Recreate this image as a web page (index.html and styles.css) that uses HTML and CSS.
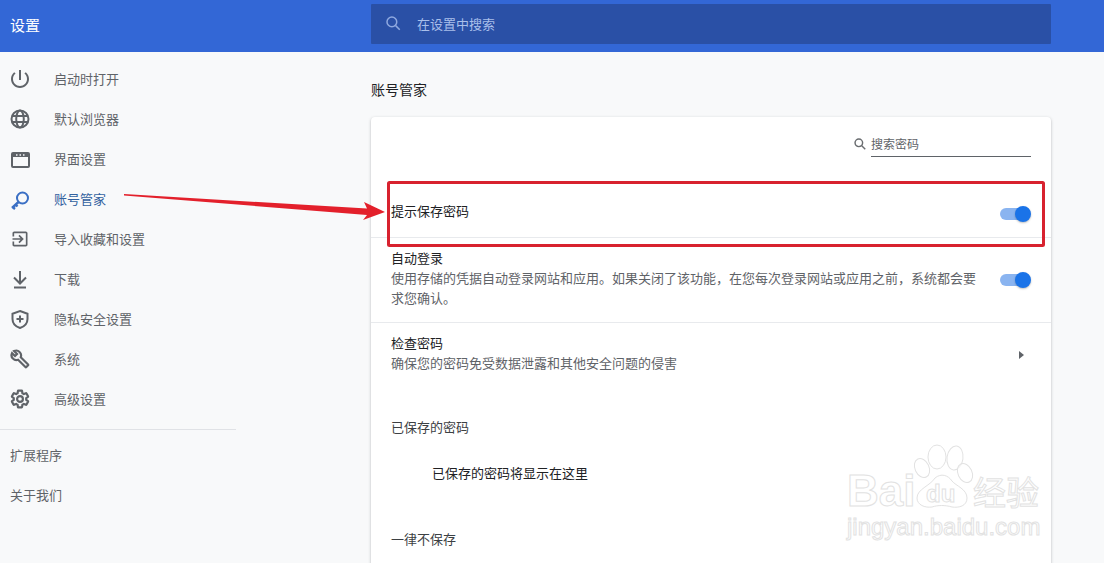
FILE: index.html
```html
<!DOCTYPE html>
<html lang="zh-CN">
<head>
    <meta charset="UTF-8">
    <title>设置</title>
    <link rel="stylesheet" href="styles.css">
</head>
<body>
    <header class="top-bar">
        <div class="top-title">设置</div>
        <div class="top-search">
            <svg class="top-search-icon" viewBox="0 0 24 24"><circle cx="10.5" cy="10.5" r="6.5"/><path d="M15.5 15.5L21 21"/></svg>
            <span>在设置中搜索</span>
        </div>
    </header>

    <div class="layout">
        <nav class="side-nav">
            <a class="nav-item">
                <svg class="nav-icon filled" viewBox="0 0 24 24"><path d="M13 3h-2v10h2V3zm4.83 2.17l-1.42 1.42C17.99 7.86 19 9.81 19 12c0 3.87-3.13 7-7 7s-7-3.13-7-7c0-2.19 1.01-4.14 2.58-5.42L6.17 5.17C4.23 6.82 3 9.26 3 12c0 4.97 4.03 9 9 9s9-4.03 9-9c0-2.74-1.23-5.18-3.17-6.83z"/></svg>
                <span class="nav-label">启动时打开</span>
            </a>
            <a class="nav-item">
                <svg class="nav-icon" viewBox="0 0 24 24"><circle cx="12" cy="12" r="8.5"/><ellipse cx="12" cy="12" rx="3.8" ry="8.5"/><path d="M4 9h16M4 15h16"/></svg>
                <span class="nav-label">默认浏览器</span>
            </a>
            <a class="nav-item">
                <svg class="nav-icon" viewBox="0 0 24 24"><rect x="4" y="6" width="17" height="14" rx="1"/><path d="M4 8h17" stroke-width="4"/><path d="M8 8h1.5M11.500 8h1.5M15 8h1.5" stroke="#f8f9fa" stroke-width="1.500"/></svg>
                <span class="nav-label">界面设置</span>
            </a>
            <a class="nav-item active">
                <svg class="nav-icon" viewBox="0 0 24 24"><circle cx="14.500" cy="11" r="5.500"/><path d="M10.500 15L4 21M4.500 20l2.500 2M7.500 17.500l2 2" stroke-width="2.400"/></svg>
                <span class="nav-label">账号管家</span>
            </a>
            <a class="nav-item">
                <svg class="nav-icon small filled" viewBox="0 0 24 24"><path d="M10.09 15.59L11.5 17l5-5-5-5-1.41 1.41L12.67 11H3v2h9.67l-2.58 2.59zM19 3H5c-1.11 0-2 .9-2 2v4h2V5h14v14H5v-4H3v4c0 1.1.89 2 2 2h14c1.1 0 2-.9 2-2V5c0-1.1-.9-2-2-2z"/></svg>
                <span class="nav-label">导入收藏和设置</span>
            </a>
            <a class="nav-item">
                <svg class="nav-icon" viewBox="0 0 24 24"><path d="M12 4v12M6 10.500l6 6 6-6M6 20.500h12"/></svg>
                <span class="nav-label">下载</span>
            </a>
            <a class="nav-item">
                <svg class="nav-icon" viewBox="0 0 24 24"><path d="M12 4l7.500 2.800v5.200c0 4.200-3 7.500-7.500 9-4.500-1.500-7.500-4.800-7.500-9V6.800z"/><path d="M12 8.500v7M8.500 12h7"/></svg>
                <span class="nav-label">隐私安全设置</span>
            </a>
            <a class="nav-item">
                <svg class="nav-icon small thick" viewBox="0 0 24 24"><path d="M21.700 18.600l-8.800-8.800c.8-2.100.4-4.500-1.400-6.200C9.700 1.800 7 1.500 4.900 2.500L8.500 6 6 8.500 2.400 5C1.400 7.100 1.800 9.800 3.500 11.500c1.700 1.700 4.100 2.200 6.200 1.400l8.800 8.800c.3.300.8.300 1.100 0l2.100-2.100c.3-.2.300-.7 0-1z"/></svg>
                <span class="nav-label">系统</span>
            </a>
            <a class="nav-item">
                <svg class="nav-icon small thick" viewBox="0 0 24 24"><path d="M19.430 12.980c.04-.32.07-.64.07-.98s-.03-.66-.07-.98l2.110-1.650c.19-.15.24-.42.12-.64l-2-3.460c-.12-.22-.39-.3-.61-.22l-2.490 1c-.52-.4-1.080-.73-1.690-.98l-.38-2.650C14.460 2.180 14.250 2 14 2h-4c-.25 0-.46.18-.49.42l-.38 2.650c-.61.25-1.170.59-1.690.98l-2.490-1c-.23-.08-.49 0-.61.22l-2 3.460c-.13.22-.07.49.12.64l2.110 1.650c-.04.32-.07.65-.07.98s.03.66.07.98l-2.110 1.650c-.19.15-.24.42-.12.64l2 3.460c.12.22.39.3.61.22l2.490-1c.52.4 1.080.73 1.690.98l.38 2.650c.03.24.24.42.49.42h4c.25 0 .46-.18.49-.42l.38-2.650c.61-.25 1.170-.59 1.690-.98l2.490 1c.23.08.49 0 .61-.22l2-3.460c.12-.22.07-.49-.12-.64z"/><circle cx="12" cy="12" r="3.500"/></svg>
                <span class="nav-label">高级设置</span>
            </a>
            <div class="nav-divider"></div>
            <a class="nav-link">扩展程序</a>
            <a class="nav-link">关于我们</a>
        </nav>

        <main class="content">
            <h2 class="page-title">账号管家</h2>
            <section class="card">
                <div class="pw-search-row">
                    <svg class="pw-search-icon" viewBox="0 0 24 24"><circle cx="10" cy="10" r="6.500"/><path d="M15 15l6 6"/></svg>
                    <div class="pw-search-input">搜索密码</div>
                </div>
                <div class="row row-single">
                    <div class="row-title">提示保存密码</div>
                    <span class="toggle"></span>
                </div>
                <div class="row row-double">
                    <div class="row-text">
                        <div class="row-title">自动登录</div>
                        <div class="row-desc">使用存储的凭据自动登录网站和应用。如果关闭了该功能，在您每次登录网站或应用之前，系统都会要求您确认。</div>
                    </div>
                    <span class="toggle"></span>
                </div>
                <div class="row row-check">
                    <div class="row-text">
                        <div class="row-title">检查密码</div>
                        <div class="row-desc">确保您的密码免受数据泄露和其他安全问题的侵害</div>
                    </div>
                    <span class="chevron"></span>
                </div>
                <div class="list-heading saved">已保存的密码</div>
                <div class="list-empty">已保存的密码将显示在这里</div>
                <div class="list-heading never">一律不保存</div>
            </section>
        </main>
    </div>

    <svg class="markup" viewBox="0 0 1104 563">
        <rect class="markup-box" x="388.500" y="182.500" width="655" height="63" rx="1"/>
        <polygon class="markup-arrow" points="124,194 367,208.500 364,202 385,212 363,220 367,215 124,195.500"/>
        <g class="watermark">
            <ellipse cx="937" cy="457" rx="9" ry="12"/>
            <ellipse cx="955" cy="458" rx="8" ry="12" transform="rotate(8 955 458)"/>
            <ellipse cx="922" cy="468" rx="7" ry="10" transform="rotate(-25 922 468)"/>
            <ellipse cx="965" cy="473" rx="7" ry="10" transform="rotate(-25 965 473)"/>
            <path d="M935 478c6-5 13-3 17 3 4 5 15 8 15 17 0 8-8 10-15 9-7-2-14-2-20 0-7 1-15-2-15-9 0-9 13-12 18-20z"/>
            <text class="wm-logo" x="847" y="506">Bai</text>
            <text class="wm-du" x="926" y="502">du</text>
            <text class="wm-cn" x="973" y="505">经验</text>
            <text class="wm-url" x="847" y="535">jingyan.baidu.com</text>
        </g>
    </svg>
</body>
</html>
```

FILE: styles.css
```css
* {
    box-sizing: border-box;
    margin: 0;
    padding: 0;
}

html, body {
    height: 100%;
    overflow: hidden;
}

body {
    position: relative;
    background-color: #f8f9fa;
    color: #202124;
    font-family: "Noto Sans CJK SC", "Liberation Sans", sans-serif;
    font-size: 13px;
}

.top-bar {
    display: flex;
    height: 52px;
    padding-top: 4px;
    background-color: #3367d6;
}

.top-title {
    width: 371px;
    padding: 10px 0 0 10px;
    color: #fff;
    font-size: 15px;
    line-height: 22px;
}

.top-search {
    display: flex;
    align-items: center;
    width: 680px;
    height: 40px;
    padding: 0 0 2px 13px;
    border-radius: 1px;
    background-color: #2a50a6;
    color: #a9bfea;
}

.top-search-icon {
    width: 18px;
    height: 18px;
    margin-right: 15px;
    fill: none;
    stroke: #8fa9e0;
    stroke-width: 2;
}

.layout {
    display: flex;
}

.side-nav {
    width: 236px;
    padding-top: 7px;
    color: #5f6368;
}

.nav-item {
    display: flex;
    align-items: center;
    gap: 22px;
    height: 40px;
    padding-left: 8px;
}

.nav-item.active {
    color: #33629f;
}

.nav-label {
    margin-bottom: 2px;
}

.nav-icon {
    flex: none;
    width: 24px;
    height: 24px;
    fill: none;
    stroke: #5f6368;
    stroke-width: 2;
}

.nav-icon.small {
    width: 20px;
    height: 20px;
    margin: 0 2px;
}

.nav-icon.thick {
    stroke-width: 2.600;
}

.nav-icon.filled {
    fill: #5f6368;
    stroke: none;
}

.active .nav-icon {
    stroke: #3a6fc4;
}

.nav-divider {
    height: 1px;
    margin: 10px 0 6px;
    background-color: #e0e2e6;
}

.nav-link {
    display: block;
    height: 40px;
    padding-left: 10px;
    line-height: 38px;
}

.content {
    width: 680px;
    margin-left: 135px;
}

.page-title {
    height: 65px;
    padding-top: 27px;
    font-size: 14px;
    font-weight: 400;
    line-height: 20px;
}

.card {
    height: 520px;
    border-radius: 4px;
    background-color: #fff;
    box-shadow: 0 1px 3px rgba(60, 64, 67, 0.35);
}

.pw-search-row {
    display: flex;
    justify-content: flex-end;
    align-items: flex-start;
    height: 71px;
    padding: 17px 20px 0 0;
}

.pw-search-icon {
    width: 14px;
    height: 14px;
    margin: 3px 4px 0 0;
    fill: none;
    stroke: #6a6d70;
    stroke-width: 2.500;
}

.pw-search-input {
    width: 160px;
    height: 23px;
    border-bottom: 1px solid #5f6368;
    color: #5f6368;
    font-size: 12px;
    line-height: 20px;
}

.row {
    display: flex;
    justify-content: space-between;
    align-items: center;
    padding: 0 20px;
    border-bottom: 1px solid #e8eaed;
}

.row-single {
    height: 50px;
}

.row-single .row-title {
    margin-bottom: 3px;
}

.row-single .toggle {
    margin-top: 2px;
}

.row-double {
    height: 85px;
    padding-top: 9px;
    padding-bottom: 14px;
}

.row-double .toggle {
    margin-top: 5px;
}

.row-check {
    height: 65px;
    padding-top: 9px;
    padding-bottom: 15px;
    border-bottom: none;
}

.row-text {
    width: 590px;
}

.row-title {
    line-height: 20px;
}

.row-desc {
    color: #5f6368;
    line-height: 20px;
}

.toggle {
    position: relative;
    flex: none;
    width: 31px;
    height: 12px;
    border-radius: 6px 0 0 6px;
    background: linear-gradient(to right, #8ab4f0 24px, transparent 24px);
}

.toggle::after {
    content: "";
    position: absolute;
    top: -2px;
    right: 0;
    width: 16px;
    height: 16px;
    border-radius: 50%;
    background-color: #1a73e8;
    box-shadow: 0 1px 2px rgba(0, 0, 0, 0.25);
}

.chevron {
    width: 0;
    height: 0;
    margin: 5px 7px 0 0;
    border-top: 4.500px solid transparent;
    border-bottom: 4.500px solid transparent;
    border-left: 5px solid #5f6368;
}

.list-heading {
    height: 40px;
    padding-left: 20px;
    line-height: 40px;
}

.list-heading.saved {
    margin-top: 19px;
    color: #3c4043;
}

.list-heading.never {
    margin-top: 26px;
    color: #3c4043;
}

.list-empty {
    height: 40px;
    margin-top: 6px;
    padding-left: 61px;
    line-height: 40px;
}

/* annotation drawn on top of the screenshot */
.markup {
    position: absolute;
    top: 0;
    left: 0;
    width: 1104px;
    height: 563px;
    pointer-events: none;
}

.markup-box {
    fill: none;
    stroke: #d8222f;
    stroke-width: 3;
}

.markup-arrow {
    fill: #e3202b;
}

.watermark * {
    fill: rgba(255, 255, 255, 0.6);
    stroke: #e2e2e2;
    stroke-width: 1;
    font-family: "Liberation Sans", sans-serif;
}

.wm-logo {
    font-size: 44px;
    font-weight: 700;
}

.wm-du {
    font-size: 24px;
    font-weight: 700;
}

.watermark .wm-cn {
    font-family: "Noto Sans CJK SC", sans-serif;
    font-size: 33px;
}

.wm-url {
    font-size: 24px;
}
```
